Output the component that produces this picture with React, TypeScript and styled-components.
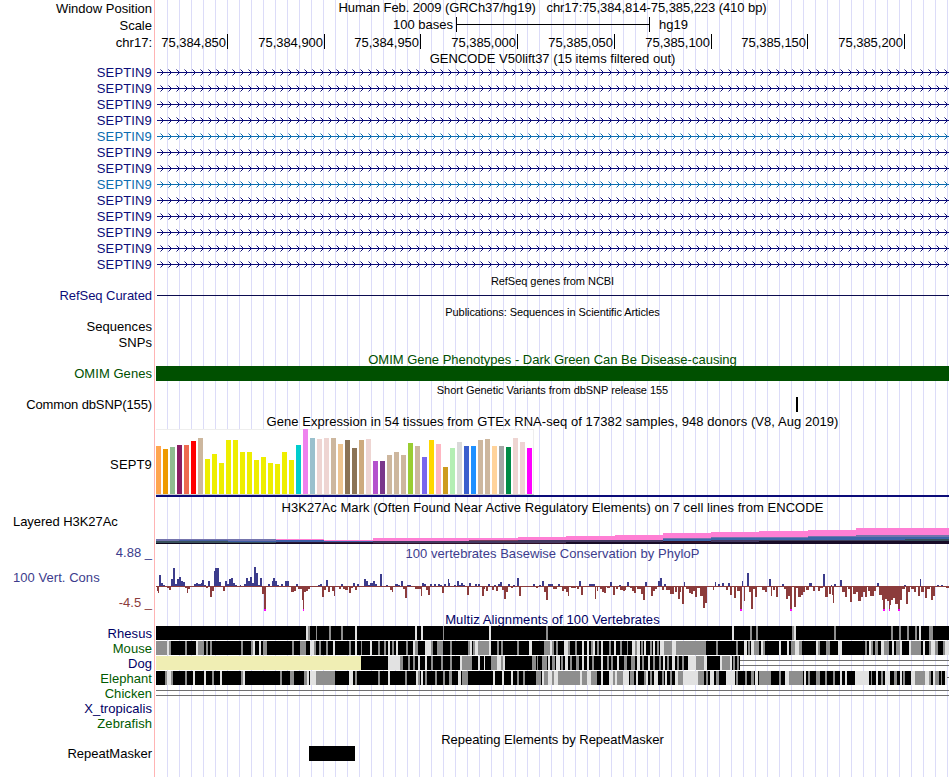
import { ReactNode } from "react"
import styled, { createGlobalStyle } from "styled-components"

const NAVY = "#0c0c78"
const BLUE = "#0c6cb0"
const GREEN = "#005000"
const LEAF = "#005a00"
const WIG_UP = "#3c3c8c"
const WIG_DOWN = "#8c3c3c"

type Span = [number, number]
type Value = [number, number, number]

// ruler ticks: cell width and position shown at the right edge of the cell
const ticks: [number, string][] = [
  [73, "75,384,850"],
  [97, "75,384,900"],
  [96, "75,384,950"],
  [97, "75,385,000"],
  [97, "75,385,050"],
  [97, "75,385,100"],
  [96, "75,385,150"],
  [97, "75,385,200"],
]

const transcripts = [NAVY, NAVY, NAVY, NAVY, BLUE, NAVY, NAVY, BLUE, NAVY, NAVY, NAVY, NAVY, NAVY]

const tissues: [number, string][] = [
  [48, "#ffa54f"], [45, "#ee9a00"], [47, "#8fbc8f"], [49, "#8b1c62"], [49, "#ee6a50"], [53, "#ff0000"],
  [56, "#cdb79e"], [35, "#eeee00"], [40, "#eeee00"], [31, "#eeee00"], [54, "#eeee00"], [54, "#eeee00"],
  [42, "#eeee00"], [42, "#eeee00"], [34, "#eeee00"], [37, "#eeee00"], [31, "#eeee00"], [30, "#eeee00"],
  [42, "#eeee00"], [34, "#eeee00"], [49, "#00cdcd"], [65, "#ee82ee"], [56, "#9ac0cd"], [55, "#eed5d2"],
  [56, "#eed5d2"], [56, "#cdb79e"], [50, "#eec591"], [54, "#8b7355"], [46, "#8b7355"], [54, "#cdaa7d"],
  [55, "#eed5d2"], [33, "#b452cd"], [33, "#7a378b"], [39, "#cdb79e"], [42, "#cdb79e"], [39, "#cdb79e"],
  [51, "#9acd32"], [48, "#cdb79e"], [37, "#7a67ee"], [54, "#ffd700"], [50, "#ffb6c1"], [27, "#cd9b1d"],
  [46, "#b4eeb4"], [52, "#d9d9d9"], [48, "#3a5fcd"], [48, "#1e90ff"], [54, "#cdb79e"], [55, "#cdb79e"],
  [48, "#ffd39b"], [48, "#a6a6a6"], [47, "#008b45"], [56, "#eed5d2"], [52, "#eed5d2"], [46, "#ff00ff"],
]

// x, end, then [top, colour] layers down to y = 31
const histone: [number, number, [number, string][]][] = [
  [156, 179, [[26, "#7474ac"], [28, "#38505c"], [30, "#10081c"]]],
  [179, 228, [[26, "#7474ac"], [27, "#4860a4"], [28, "#38505c"], [30, "#10081c"]]],
  [228, 276, [[26, "#7474ac"], [28, "#3c5ca4"], [29, "#38505c"], [30, "#10081c"]]],
  [276, 324, [[26, "#ff7fd4"], [27, "#3c5ca4"], [29, "#281838"], [30, "#180c24"]]],
  [324, 373, [[27, "#ff7fd4"], [28, "#3c5ca4"], [29, "#401838"], [30, "#180c24"]]],
  [373, 469, [[25, "#ff7fd4"], [28, "#443860"], [30, "#301028"]]],
  [469, 518, [[25, "#ff7fd4"], [27, "#7c3c5c"], [28, "#443860"], [30, "#301028"]]],
  [518, 566, [[24, "#ff7fd4"], [27, "#443860"], [30, "#301028"]]],
  [566, 615, [[23, "#ff7fd4"], [27, "#443860"], [29, "#180c28"]]],
  [615, 663, [[22, "#ff7fd4"], [27, "#443860"], [29, "#180c28"]]],
  [663, 711, [[20, "#ff7fd4"], [25, "#7474ac"], [26, "#3c64a8"], [28, "#301028"], [30, "#180c28"]]],
  [711, 759, [[19, "#ff7fd4"], [24, "#7474ac"], [25, "#3c64a8"], [27, "#443860"], [29, "#180c28"]]],
  [759, 808, [[18, "#ff7fd4"], [24, "#7474ac"], [25, "#3c64a8"], [27, "#40405c"], [28, "#180c28"]]],
  [808, 856, [[17, "#ff7fd4"], [23, "#7474ac"], [24, "#3c64a8"], [27, "#40405c"], [28, "#180c28"]]],
  [856, 905, [[15, "#ff7fd4"], [22, "#7474ac"], [24, "#3c64a8"], [27, "#40405c"], [28, "#180c28"]]],
  [905, 949, [[15, "#ff7fd4"], [22, "#7474ac"], [24, "#3c64a8"], [26, "#38505c"], [28, "#180c28"]]],
]

// x, width, score in pixels; anything at -25 is clipped
const phyloP: Value[] = [
  [157, 1, -5], [158, 1, -7], [159, 2, 11], [161, 2, 3], [163, 2, 1], [167, 2, -2], [169, 2, -4], [171, 2, 7],
  [173, 2, 18], [175, 2, 2], [177, 2, 7], [179, 2, 9], [181, 2, 5], [183, 2, 4], [185, 2, -2], [187, 1, -7],
  [188, 2, -3], [194, 2, 2], [196, 2, 3], [198, 3, 2], [201, 2, 3], [202, 2, 6], [204, 2, 1], [206, 2, -2],
  [208, 2, 5], [210, 2, -11], [212, 2, -5], [214, 1, 15], [215, 4, 18], [219, 2, 4], [223, 2, -5], [225, 2, 5],
  [227, 2, 2], [229, 2, 7], [231, 2, 8], [233, 2, 3], [235, 2, 1], [240, 1, 1], [244, 2, 2], [246, 2, 8],
  [248, 2, 5], [250, 2, 9], [252, 2, 3], [254, 2, 19], [256, 2, 13], [258, 2, 1], [260, 2, 8], [262, 2, -8],
  [264, 2, -25], [268, 2, 2], [272, 1, 5], [273, 2, 8], [275, 2, 5], [277, 2, 1], [281, 2, 2], [285, 4, 5],
  [291, 3, -6], [294, 2, -5], [296, 2, 2], [298, 2, -3], [300, 2, -3], [302, 1, -14], [303, 1, -25],
  [304, 2, -6], [306, 2, -5], [308, 2, -3], [318, 2, 1], [320, 2, 2], [322, 2, -11], [324, 2, -4], [326, 2, 6],
  [328, 2, -6], [332, 2, -5], [334, 1, -10], [339, 2, -3], [341, 2, 2], [343, 2, -3], [345, 3, -4], [349, 2, -7],
  [351, 2, -2], [353, 2, 3], [355, 2, -4], [357, 2, 2], [364, 2, 7], [366, 2, 5], [368, 2, 1], [370, 3, 3],
  [373, 2, 5], [375, 2, 2], [380, 2, 12], [386, 2, 1], [390, 2, -4], [392, 1, -6], [395, 3, 2], [398, 2, 1],
  [401, 2, 5], [403, 2, -3], [405, 2, -12], [407, 4, 1], [415, 6, -3], [421, 1, -10], [422, 2, 3], [424, 2, 2],
  [426, 2, -4], [428, 2, -9], [430, 2, 2], [434, 2, 2], [438, 2, 2], [440, 2, 1], [442, 2, -7], [444, 2, 2],
  [448, 1, 7], [449, 1, 3], [454, 2, 1], [457, 2, 5], [459, 2, 1], [461, 2, 3], [463, 2, 1], [467, 2, -9],
  [469, 2, 3], [475, 2, 2], [478, 2, 2], [482, 2, -10], [484, 1, -3], [486, 2, -5], [488, 2, 2], [492, 2, -4],
  [494, 2, 1], [496, 2, -5], [498, 2, 2], [500, 2, 4], [502, 2, -4], [504, 2, -13], [506, 2, -6], [508, 2, 2],
  [511, 2, -2], [513, 2, 1], [517, 2, 8], [519, 2, -10], [533, 2, 2], [536, 2, -2], [539, 2, 1], [542, 2, 5],
  [544, 2, -6], [546, 2, -14], [548, 5, 2], [553, 4, -3], [558, 2, 2], [562, 2, -5], [564, 2, -3], [566, 2, -6],
  [568, 1, -10], [571, 5, -2], [577, 2, -3], [579, 2, 5], [581, 2, -9], [589, 6, 2], [595, 1, -13], [597, 1, -5],
  [600, 2, -3], [602, 2, -6], [604, 2, -7], [607, 3, -2], [610, 2, 4], [613, 2, -9], [616, 2, -3], [619, 2, 1],
  [620, 3, -4], [623, 2, -5], [625, 1, -4], [627, 2, 4], [630, 2, -2], [632, 2, -5], [634, 2, -7], [637, 4, -3],
  [641, 2, -8], [643, 2, -14], [645, 2, 4], [647, 1, -1], [651, 2, -10], [653, 2, -5], [655, 2, -3], [658, 2, 5],
  [660, 2, 8], [662, 2, -4], [664, 2, 2], [666, 4, -4], [670, 4, -8], [675, 2, -6], [678, 2, -13], [680, 1, -6],
  [682, 2, -18], [684, 1, 4], [686, 3, -3], [689, 2, -7], [691, 2, -8], [693, 2, -5], [695, 2, -11], [697, 3, -2],
  [700, 3, -10], [703, 2, -22], [705, 2, -17], [713, 1, -4], [715, 1, 4], [718, 2, 2], [722, 2, 3], [726, 2, -4],
  [728, 2, 3], [730, 2, -9], [734, 2, -12], [737, 3, -5], [740, 2, -25], [742, 1, 5], [744, 1, -15], [747, 2, 13],
  [749, 2, -6], [751, 2, -23], [753, 2, -3], [755, 2, -11], [762, 3, -4], [765, 2, -6], [769, 2, 7], [771, 1, -10],
  [773, 2, -4], [776, 2, -11], [782, 2, 2], [784, 2, -3], [786, 2, -13], [788, 3, -10], [790, 2, -25],
  [794, 2, -21], [796, 2, -2], [798, 3, -11], [801, 2, -9], [803, 2, -6], [806, 3, -4], [809, 3, 3], [813, 2, -5],
  [818, 2, -5], [820, 3, -2], [823, 2, 12], [825, 3, -11], [829, 2, -8], [831, 1, 1], [832, 1, -9], [833, 1, -17],
  [834, 2, 2], [840, 2, 6], [842, 3, -6], [845, 2, -11], [848, 2, -3], [850, 2, -16], [853, 3, -8], [856, 2, -6],
  [858, 3, -15], [861, 2, -11], [863, 2, -6], [865, 2, -11], [868, 2, -5], [870, 4, -10], [874, 2, -5],
  [877, 2, 3], [879, 3, -9], [882, 1, -14], [883, 2, -25], [885, 2, -13], [887, 2, -15], [889, 1, -25],
  [890, 1, -19], [891, 2, -14], [893, 2, -12], [895, 3, -18], [898, 2, -25], [900, 2, -14], [902, 3, -3],
  [904, 2, 1], [906, 2, -18], [908, 2, -6], [911, 3, -3], [914, 2, -6], [918, 2, -10], [920, 1, 7], [921, 3, -6],
  [925, 2, -12], [927, 3, -3], [931, 2, -14], [933, 2, -10], [937, 2, 1], [941, 2, 1], [946, 3, -2],
]

interface Species {
  name: string
  color: string
  end?: number
  inserted?: Span
  light: Span[]
  gray: Span[]
}

const species: Species[] = [
  {
    name: "Rhesus",
    color: "#000064",
    light: [[306, 2], [355, 2], [415, 2], [421, 2], [489, 2], [732, 2], [794, 2], [919, 2]],
    gray: [[308, 2], [316, 1], [329, 2], [341, 2], [443, 1], [546, 2], [750, 2], [756, 2], [792, 2], [834, 2], [891, 2], [899, 2], [907, 2], [915, 2], [929, 4]],
  },
  {
    name: "Mouse",
    color: LEAF,
    light: [[167, 2], [196, 2], [253, 2], [259, 2], [310, 4], [333, 2], [355, 2], [370, 2], [388, 2], [396, 2], [413, 2], [425, 6], [470, 2], [475, 3], [489, 2], [529, 3], [550, 2], [564, 4], [582, 2], [587, 2], [593, 2], [601, 2], [614, 2], [632, 3], [637, 3], [644, 2], [653, 2], [660, 4], [672, 4], [744, 3], [751, 3], [761, 2], [779, 2], [787, 2], [795, 4], [816, 2], [838, 4], [869, 2], [881, 3], [892, 2], [900, 2], [909, 2], [923, 2], [931, 4], [945, 4]],
    gray: [[156, 11], [169, 2], [185, 2], [198, 6], [206, 2], [210, 2], [241, 2], [251, 2], [263, 4], [292, 2], [300, 6], [314, 2], [319, 2], [326, 2], [349, 2], [361, 1], [378, 2], [384, 2], [392, 2], [406, 2], [415, 3], [431, 2], [437, 6], [450, 2], [468, 2], [473, 2], [478, 11], [497, 2], [501, 2], [517, 2], [544, 6], [552, 2], [556, 2], [568, 2], [575, 2], [591, 2], [597, 2], [609, 2], [620, 2], [627, 1], [635, 2], [641, 2], [650, 2], [657, 2], [664, 8], [676, 30], [716, 2], [736, 2], [748, 2], [754, 5], [763, 2], [791, 4], [799, 3], [818, 2], [826, 4], [865, 2], [871, 2], [875, 3], [884, 5], [896, 4], [911, 10], [929, 2], [935, 3], [943, 2]],
  },
  {
    name: "Dog",
    color: "#000064",
    end: 740,
    inserted: [156, 205],
    light: [[388, 12], [418, 2], [425, 2], [460, 2], [478, 2], [484, 1], [497, 4], [503, 2], [548, 2], [556, 4], [565, 3], [582, 2], [587, 2], [601, 2], [617, 2], [637, 3], [648, 2], [663, 2], [672, 3], [688, 8], [704, 3], [720, 2], [730, 2]],
    gray: [[400, 3], [408, 2], [413, 2], [431, 2], [441, 2], [450, 2], [462, 10], [491, 6], [501, 2], [532, 4], [537, 1], [542, 5], [552, 3], [561, 2], [570, 2], [576, 3], [592, 2], [607, 2], [611, 2], [624, 3], [631, 4], [642, 2], [653, 2], [659, 2], [667, 2], [677, 2], [682, 2], [696, 8], [722, 8], [733, 2], [737, 2]],
  },
  {
    name: "Elephant",
    color: LEAF,
    end: 947,
    light: [[167, 4], [193, 2], [204, 2], [220, 2], [243, 2], [307, 2], [310, 6], [349, 4], [388, 2], [416, 2], [421, 2], [458, 3], [493, 2], [502, 2], [511, 2], [542, 2], [548, 4], [554, 4], [580, 2], [587, 4], [601, 2], [609, 4], [615, 2], [623, 6], [636, 2], [646, 2], [654, 4], [665, 2], [675, 3], [683, 3], [686, 12], [710, 4], [726, 9], [755, 3], [785, 4], [804, 2], [840, 2], [845, 2], [855, 14], [876, 2], [885, 5], [900, 2], [911, 4], [925, 4], [933, 2], [945, 2]],
    gray: [[165, 2], [171, 2], [185, 2], [212, 2], [241, 2], [280, 2], [290, 4], [304, 3], [316, 19], [355, 2], [378, 2], [405, 2], [418, 2], [425, 2], [435, 2], [443, 2], [449, 3], [462, 6], [517, 2], [523, 2], [536, 5], [544, 4], [552, 2], [558, 22], [582, 5], [591, 6], [613, 2], [617, 6], [630, 4], [644, 2], [650, 2], [662, 2], [670, 2], [678, 5], [698, 6], [706, 2], [716, 3], [736, 2], [745, 2], [751, 3], [759, 12], [779, 2], [789, 2], [791, 12], [808, 2], [816, 4], [825, 2], [833, 2], [871, 1], [881, 2], [894, 3], [903, 2], [915, 10], [929, 2], [935, 4], [941, 1]],
  },
]

interface CaptionProps {
  children: ReactNode
  drop?: number
  color?: string
  small?: boolean
  spacing?: number
}

const Plot = ({ height, children }: { height: number; children: ReactNode }) => (
  <Canvas width={794} height={height} viewBox={`155 0 794 ${height}`}>
    {children}
  </Canvas>
)

const Caption = ({ children, drop = 0, color, small, spacing = 0 }: CaptionProps) => (
  <CaptionText $drop={drop} $color={color} $small={small} $spacing={spacing}>
    {children}
  </CaptionText>
)

const Ruler = () => (
  <>
    <Row $height={17}>
      <Label $drop={1}>Window Position</Label>
      <Caption spacing={-0.07}>Human Feb. 2009 (GRCh37/hg19) &nbsp; chr17:75,384,814-75,385,223 (410 bp)</Caption>
    </Row>
    <Row $height={17}>
      <Label $drop={1}>Scale</Label>
      <ScaleCell>
        <span>100 bases</span>
        <ScaleBar />
        <span>hg19</span>
      </ScaleCell>
    </Row>
    <Row $height={17}>
      <Label $drop={1}>chr17:</Label>
      <TickCell>
        {ticks.map(([width, text]) => (
          <Tick key={text} $width={width}>{text}</Tick>
        ))}
      </TickCell>
    </Row>
  </>
)

const Transcript = ({ color }: { color: string }) => {
  const tips: number[] = []
  for (let x = 163; x < 950; x += 8) tips.push(x)
  return (
    <Row $height={16}>
      <Label $drop={1} $color={color} $spacing={0.15}>SEPTIN9</Label>
      <Plot height={16}>
        <rect x={157} y={8} width={792} height={1} fill={color} />
        {tips.map((x) => (
          <g key={x} fill={color}>
            <path d={`M${x - 1} 7h1v3h-1zM${x - 2} 6h1v1h-1zM${x - 2} 10h1v1h-1z`} />
            <path opacity={0.5} d={`M${x - 3} 5h1v1h-1zM${x - 3} 11h1v1h-1z`} />
          </g>
        ))}
      </Plot>
    </Row>
  )
}

const Expression = () => (
  <Row $height={68}>
    <Label $drop={28} $spacing={0.15}>SEPT9</Label>
    <Plot height={68}>
      <rect x={156} y={0} width={378} height={65} fill="#fff" />
      <path d="M156 .5H533.5V65" fill="none" stroke="#eeeeee" />
      <rect x={156} y={65} width={378} height={1} fill="#cccccc" />
      {tissues.map(([size, color], i) => (
        <rect key={i} x={156 + i * 7} y={65 - size} width={5} height={size} fill={color} />
      ))}
      <rect x={156} y={66} width={793} height={2} fill={NAVY} />
    </Plot>
  </Row>
)

const Histone = () => (
  <Row $height={31}>
    <Label $drop={1} $left $spacing={-0.05}>Layered H3K27Ac</Label>
    <Plot height={31}>
      {histone.map(([x, end, layers]) =>
        layers.map(([top, color]) => (
          <rect key={`${x}-${top}`} x={x} y={top} width={end - x} height={31 - top} fill={color} />
        ))
      )}
    </Plot>
  </Row>
)

const Conservation = () => (
  <Row $height={68}>
    <Column>
      <Label $drop={1} $color={WIG_UP}>4.88 _</Label>
      <Label $drop={10} $left $color={WIG_UP} $spacing={0.05}>100 Vert. Cons</Label>
      <Label $drop={10} $color={WIG_DOWN}>-4.5 _</Label>
    </Column>
    <Column>
      <Caption drop={2} color={WIG_UP} spacing={0.04}>100 vertebrates Basewise Conservation by PhyloP</Caption>
      <Plot height={51}>
        <rect x={156} y={25} width={793} height={1} fill={WIG_DOWN} />
        {phyloP.map(([x, width, score]) => (
          <rect
            key={x}
            x={x}
            y={score > 0 ? 25 - score : 25}
            width={width}
            height={Math.abs(score)}
            fill={score > 0 ? WIG_UP : WIG_DOWN}
          />
        ))}
        {phyloP.filter(([, , score]) => score === -25).map(([x, width]) => (
          <rect key={x} x={x} y={48} width={width} height={2} fill="#ff00ff" />
        ))}
      </Plot>
    </Column>
  </Row>
)

const Alignment = ({ name, color, end = 949, inserted, light, gray }: Species) => (
  <Row $height={15}>
    <Label $color={color} $spacing={0.05}>{name}</Label>
    <Plot height={15}>
      <rect x={156} y={0} width={end - 156} height={14} fill="#000" />
      {inserted && <rect x={inserted[0]} y={0} width={inserted[1]} height={14} fill="#f0eeb4" />}
      {gray.map(([x, width]) => <rect key={x} x={x} y={0} width={width} height={14} fill="#8e8e8e" />)}
      {light.map(([x, width]) => <rect key={x} x={x} y={0} width={width} height={14} fill="#e2e2e2" />)}
      {name === "Dog" && <path d="M740 4h209v1h-209zM740 9h209v1h-209z" fill="#707070" />}
      {name === "Elephant" && <rect x={947} y={6} width={2} height={1} fill="#707070" />}
    </Plot>
  </Row>
)

const App = () => {
  return (
    <>
      <GlobalStyle />
      <Browser>
        <Ruler />
        <Row $height={13}>
          <Label />
          <Caption>GENCODE V50lift37 (15 items filtered out)</Caption>
        </Row>
        {transcripts.map((color, i) => <Transcript key={i} color={color} />)}
        <Row $height={16}>
          <Label />
          <Caption small drop={3} spacing={-0.04}>RefSeq genes from NCBI</Caption>
        </Row>
        <Row $height={16}>
          <Label $color={NAVY} $spacing={-0.05}>RefSeq Curated</Label>
          <Plot height={16}>
            <rect x={157} y={7} width={792} height={1} fill="#0c0c50" />
          </Plot>
        </Row>
        <Row $height={14}>
          <Label />
          <Caption small drop={2} spacing={-0.07}>Publications: Sequences in Scientific Articles</Caption>
        </Row>
        <Row $height={16}>
          <Label $drop={1} $spacing={0.05}>Sequences</Label>
        </Row>
        <Row $height={16}>
          <Label $drop={1} $spacing={0.05}>SNPs</Label>
        </Row>
        <Row $height={16}>
          <Label />
          <Caption drop={2} color={GREEN}>OMIM Gene Phenotypes - Dark Green Can Be Disease-causing</Caption>
        </Row>
        <Row $height={16}>
          <Label $color={GREEN} $spacing={0.05}>OMIM Genes</Label>
          <Plot height={16}>
            <rect x={156} y={0} width={793} height={15} fill={GREEN} />
          </Plot>
        </Row>
        <Row $height={15}>
          <Label />
          <Caption small drop={2} spacing={-0.04}>Short Genetic Variants from dbSNP release 155</Caption>
        </Row>
        <Row $height={16}>
          <Label $spacing={-0.12}>Common dbSNP(155)</Label>
          <Plot height={16}>
            <rect x={796} y={0} width={2} height={15} fill="#000" />
          </Plot>
        </Row>
        <Row $height={16}>
          <Label />
          <Caption drop={1} spacing={0.05}>Gene Expression in 54 tissues from GTEx RNA-seq of 17382 samples, 948 donors (V8, Aug 2019)</Caption>
        </Row>
        <Expression />
        <Row $height={16}>
          <Label />
          <Caption drop={3} spacing={0.05}>H3K27Ac Mark (Often Found Near Active Regulatory Elements) on 7 cell lines from ENCODE</Caption>
        </Row>
        <Histone />
        <Conservation />
        <Row $height={14}>
          <Label />
          <Caption color="#000064" spacing={0.1}>Multiz Alignments of 100 Vertebrates</Caption>
        </Row>
        {species.map((item) => <Alignment key={item.name} {...item} />)}
        <Row $height={15}>
          <Label $color={LEAF} $spacing={0.05}>Chicken</Label>
          <Plot height={15}>
            <path d="M156 4h793v1h-793zM156 9h793v1h-793z" fill="#707070" />
          </Plot>
        </Row>
        <Row $height={15}>
          <Label $color="#000064" $spacing={0.05}>X_tropicalis</Label>
        </Row>
        <Row $height={15}>
          <Label $color={LEAF} $spacing={0.05}>Zebrafish</Label>
        </Row>
        <Row $height={15}>
          <Label />
          <Caption drop={1}>Repeating Elements by RepeatMasker</Caption>
        </Row>
        <Row $height={31}>
          <Label>RepeatMasker</Label>
          <Plot height={31}>
            <rect x={309} y={0} width={46} height={15} fill="#000" />
          </Plot>
        </Row>
      </Browser>
    </>
  )
}

export default App

const GlobalStyle = createGlobalStyle`
  body {
    margin: 0;
    background: #fff;
  }
`

const Browser = styled.main`
  width: 949px;
  height: 777px;
  overflow: hidden;
  font-family: "Liberation Sans", Arial, sans-serif;
  font-size: 13px;
  line-height: 15px;
  color: #000;
  white-space: nowrap;
  background:
    linear-gradient(#ffb4b4, #ffb4b4) 154px 0 / 1px 100% no-repeat,
    repeating-linear-gradient(90deg, #dcdcf8 0 1px, transparent 1px 12px) 167px 0 / 782px 100% no-repeat;
`

const Row = styled.div<{ $height: number }>`
  display: grid;
  grid-template-columns: 155px 794px;
  height: ${(p) => p.$height}px;
`

interface LabelProps {
  $drop?: number
  $color?: string
  $left?: boolean
  $spacing?: number
}

const Label = styled.div<LabelProps>`
  height: 15px;
  margin-top: ${(p) => p.$drop ?? 0}px;
  padding: 0 3px 0 13px;
  color: ${(p) => p.$color ?? "#000"};
  text-align: ${(p) => (p.$left ? "left" : "right")};
  letter-spacing: ${(p) => p.$spacing ?? 0}px;
`

const CaptionText = styled.div<{ $drop: number; $color?: string; $small?: boolean; $spacing: number }>`
  height: 15px;
  margin-top: ${(p) => p.$drop}px;
  padding-left: 1px;
  color: ${(p) => p.$color ?? "#000"};
  font-size: ${(p) => (p.$small ? 11 : 13)}px;
  line-height: ${(p) => (p.$small ? 12 : 15)}px;
  letter-spacing: ${(p) => p.$spacing}px;
  text-align: center;
`

const ScaleCell = styled.div`
  display: flex;
  padding-left: 238px;
`

const ScaleBar = styled.div`
  width: 192px;
  height: 15px;
  margin: 0 9px 0 3px;
  border: solid #000;
  border-width: 0 1px;
  background: linear-gradient(#000, #000) 0 7px / 100% 1px no-repeat;
`

const TickCell = styled.div`
  display: flex;
`

const Tick = styled.div<{ $width: number }>`
  box-sizing: border-box;
  width: ${(p) => p.$width}px;
  height: 15px;
  padding: 1px 1px 0 0;
  border-right: 1px solid #000;
  text-align: right;
  letter-spacing: -0.03px;
`

const Column = styled.div`
  display: flex;
  flex-direction: column;
`

const Canvas = styled.svg`
  display: block;
  shape-rendering: crispEdges;
`
